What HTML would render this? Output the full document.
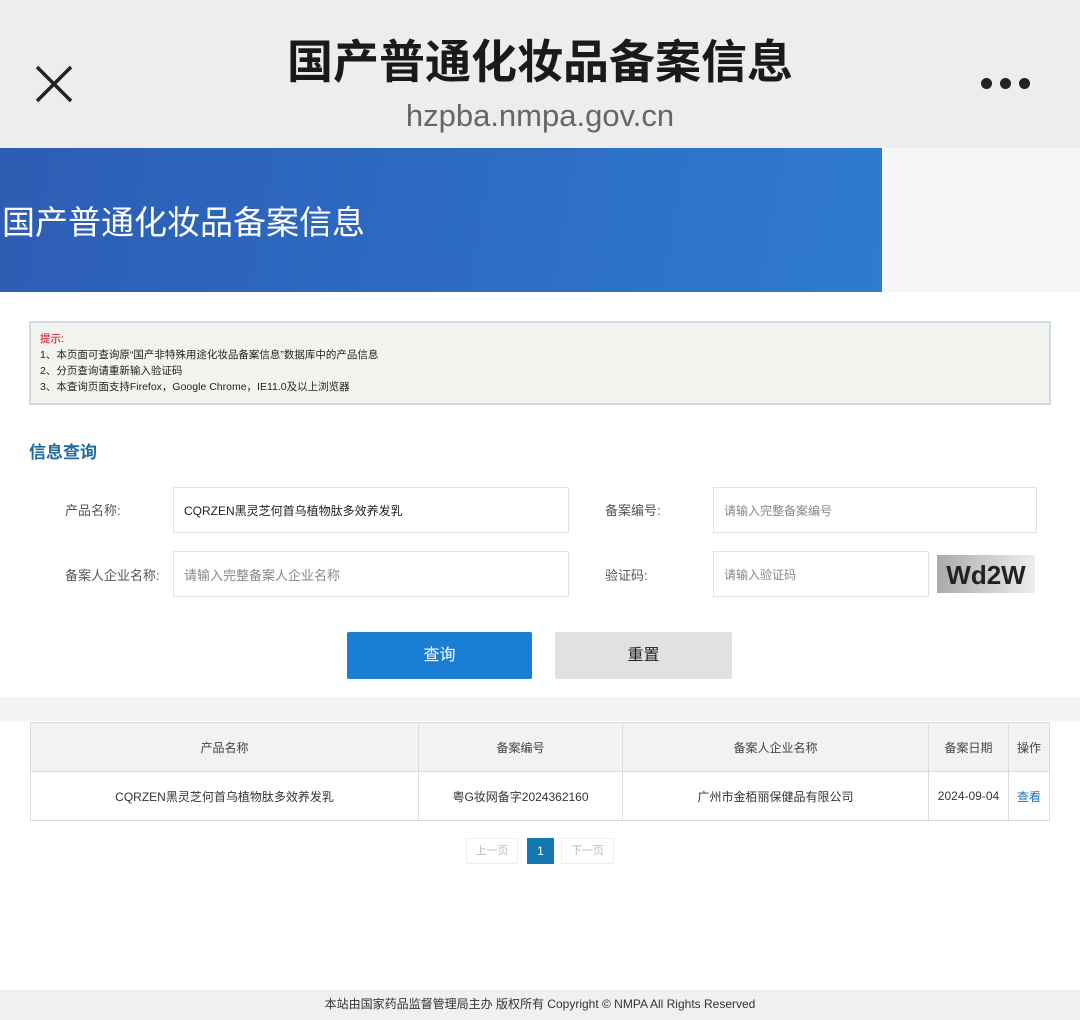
<!DOCTYPE html>
<html><head><meta charset="utf-8"><style>
*{margin:0;padding:0;box-sizing:border-box}
body{width:1080px;height:1020px;position:relative;background:#fff;font-family:"Liberation Sans","Noto Sans CJK SC",sans-serif;overflow:hidden;color:#333}
.a{position:absolute}
.inp{position:absolute;border:1px solid #e2e2e2;background:#fff;font-size:12px;color:#888;padding-left:10px;display:flex;align-items:center}
.lbl{position:absolute;font-size:13px;color:#555}
table{border-collapse:collapse;position:absolute;left:30px;top:722px;width:1020px;font-size:12px;color:#333}
td{border:1px solid #d8dde4;text-align:center;vertical-align:middle}
</style></head><body>
<div class="a" style="left:0;top:0;width:1080px;height:148px;background:#ededed"></div>
<svg class="a" style="left:35px;top:65px" width="38" height="38"><path d="M2 2L36 36M36 2L2 36" stroke="#222" stroke-width="3.5"/></svg>
<div class="a" style="left:0;top:32px;width:1080px;text-align:center;font-size:46px;font-weight:bold;color:#1a1a1a;line-height:60px">国产普通化妆品备案信息</div>
<div class="a" style="left:0;top:96px;width:1080px;text-align:center;font-size:31px;color:#666;line-height:40px">hzpba.nmpa.gov.cn</div>
<div class="a" style="left:981px;top:78px;display:flex;gap:8px"><i style="width:11px;height:11px;border-radius:6px;background:#222;display:block"></i><i style="width:11px;height:11px;border-radius:6px;background:#222;display:block"></i><i style="width:11px;height:11px;border-radius:6px;background:#222;display:block"></i></div>
<div class="a" style="left:0;top:148px;width:882px;height:144px;background:linear-gradient(100deg,#2d5db3 0%,#2d68c0 40%,#2f7bd0 100%)"></div>
<div class="a" style="left:882px;top:148px;width:198px;height:144px;background:#f4f6f8"></div>
<div class="a" style="left:2px;top:201px;font-size:33px;color:#fff;line-height:44px">国产普通化妆品备案信息</div>
<div class="a" style="left:29px;top:321px;width:1022px;height:84px;background:#f3f3ef;border:2px solid #cfdbe6;font-size:10.5px;line-height:16px;padding:8px 0 0 9px;color:#222">
<div style="color:#d0021b">提示:</div>
<div>1、本页面可查询原“国产非特殊用途化妆品备案信息”数据库中的产品信息</div>
<div>2、分页查询请重新输入验证码</div>
<div>3、本查询页面支持Firefox，Google Chrome，IE11.0及以上浏览器</div></div>
<div class="a" style="left:29px;top:438px;font-size:17px;font-weight:bold;color:#1f6b9e">信息查询</div>
<div class="lbl" style="left:65px;top:500px">产品名称:</div>
<div class="inp" style="left:173px;top:487px;width:396px;height:46px;color:#222">CQRZEN黑灵芝何首乌植物肽多效养发乳</div>
<div class="lbl" style="left:605px;top:500px">备案编号:</div>
<div class="inp" style="left:713px;top:487px;width:324px;height:46px">请输入完整备案编号</div>
<div class="lbl" style="left:65px;top:565px">备案人企业名称:</div>
<div class="inp" style="left:173px;top:551px;width:396px;height:46px;font-size:13px">请输入完整备案人企业名称</div>
<div class="lbl" style="left:605px;top:565px">验证码:</div>
<div class="inp" style="left:713px;top:551px;width:216px;height:46px">请输入验证码</div>
<div class="a" style="left:937px;top:555px;width:98px;height:38px;background:linear-gradient(90deg,#aaa,#eee);font-size:26px;font-weight:bold;color:#222;text-align:center;line-height:40px">Wd2W</div>
<div class="a" style="left:347px;top:632px;width:185px;height:47px;background:#1a7fd4;border-radius:2px;color:#fff;font-size:16px;text-align:center;line-height:47px">查询</div>
<div class="a" style="left:555px;top:632px;width:177px;height:47px;background:#e1e1e1;border-radius:2px;color:#222;font-size:16px;text-align:center;line-height:47px">重置</div>
<div class="a" style="left:0;top:697px;width:1080px;height:24px;background:#f2f4f6"></div>
<table>
<tr style="height:49px;background:#f2f2f2;color:#444"><td style="width:388px">产品名称</td><td style="width:204px">备案编号</td><td style="width:306px">备案人企业名称</td><td style="width:80px">备案日期</td><td>操作</td></tr>
<tr style="height:49px"><td>CQRZEN黑灵芝何首乌植物肽多效养发乳</td><td>粤G妆网备字2024362160</td><td>广州市金栢丽保健品有限公司</td><td>2024-09-04</td><td style="color:#1b6fb5">查看</td></tr>
</table>
<div class="a" style="left:466px;top:838px;width:52px;height:26px;border:1px solid #eee;font-size:11px;color:#bbb;text-align:center;line-height:24px">上一页</div>
<div class="a" style="left:527px;top:838px;width:27px;height:26px;background:#1478b0;font-size:12px;color:#fff;text-align:center;line-height:26px">1</div>
<div class="a" style="left:561px;top:838px;width:53px;height:26px;border:1px solid #eee;font-size:11px;color:#bbb;text-align:center;line-height:24px">下一页</div>
<div class="a" style="left:0;top:990px;width:1080px;height:30px;background:#eef0f2;font-size:12px;color:#333;text-align:center;line-height:28px">本站由国家药品监督管理局主办 版权所有 Copyright © NMPA All Rights Reserved</div>
</body></html>
